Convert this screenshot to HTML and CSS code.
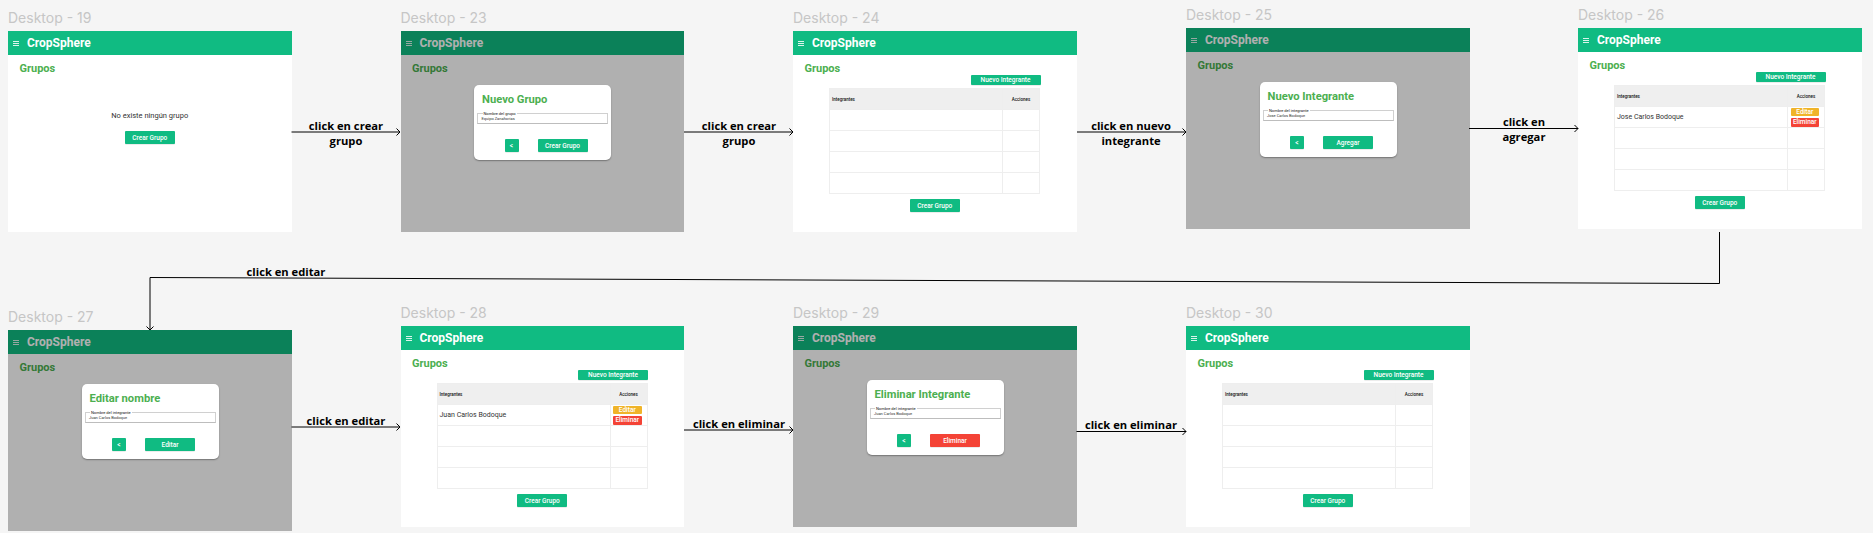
FILE: index.html
```html
<!DOCTYPE html>
<html lang="en">
<head>
    <meta charset="UTF-8">
    <meta name="viewport" content="width=device-width, initial-scale=1.0">
    <title>CropSphere - Flujo de grupos</title>
    <link rel="stylesheet" href="styles.css">
</head>
<body>
<div id="canvas">

    <!-- Desktop - 19 -->
    <section class="screen d19">
        <div class="screen-title">Desktop - 19</div>
        <div class="frame">
            <header class="topbar"><span class="burger"><i></i><i></i><i></i></span><span class="brand">CropSphere</span></header>
            <main class="content">
                <h2 class="heading">Grupos</h2>
                <p class="empty">No existe ningún grupo</p>
                <div class="center-row"><button class="btn btn-main">Crear Grupo</button></div>
            </main>
        </div>
    </section>

    <!-- Desktop - 23 -->
    <section class="screen d23">
        <div class="screen-title">Desktop - 23</div>
        <div class="frame">
            <header class="topbar"><span class="burger"><i></i><i></i><i></i></span><span class="brand">CropSphere</span></header>
            <main class="content"><h2 class="heading">Grupos</h2></main>
            <div class="dim">
                <div class="modal">
                    <h3 class="modal-title">Nuevo Grupo</h3>
                    <fieldset class="field"><legend>Nombre del grupo</legend><span>Equipo Zanahorias</span></fieldset>
                    <div class="modal-actions"><button class="btn btn-back">&lt;</button><button class="btn btn-main">Crear Grupo</button></div>
                </div>
            </div>
        </div>
    </section>

    <!-- Desktop - 24 -->
    <section class="screen d24">
        <div class="screen-title">Desktop - 24</div>
        <div class="frame">
            <header class="topbar"><span class="burger"><i></i><i></i><i></i></span><span class="brand">CropSphere</span></header>
            <main class="content">
                <h2 class="heading">Grupos</h2>
                <div class="new-row"><button class="btn btn-new">Nuevo Integrante</button></div>
                <table class="members">
                    <tr><th>Integrantes</th><th>Acciones</th></tr>
                    <tr><td></td><td></td></tr>
                    <tr><td></td><td></td></tr>
                    <tr><td></td><td></td></tr>
                    <tr><td></td><td></td></tr>
                </table>
                <div class="center-row"><button class="btn btn-main">Crear Grupo</button></div>
            </main>
        </div>
    </section>

    <!-- Desktop - 25 -->
    <section class="screen d25">
        <div class="screen-title">Desktop - 25</div>
        <div class="frame">
            <header class="topbar"><span class="burger"><i></i><i></i><i></i></span><span class="brand">CropSphere</span></header>
            <main class="content"><h2 class="heading">Grupos</h2></main>
            <div class="dim">
                <div class="modal">
                    <h3 class="modal-title">Nuevo Integrante</h3>
                    <fieldset class="field"><legend>Nombre del integrante</legend><span>Jose Carlos Bodoque</span></fieldset>
                    <div class="modal-actions"><button class="btn btn-back">&lt;</button><button class="btn btn-main">Agregar</button></div>
                </div>
            </div>
        </div>
    </section>

    <!-- Desktop - 26 -->
    <section class="screen d26">
        <div class="screen-title">Desktop - 26</div>
        <div class="frame">
            <header class="topbar"><span class="burger"><i></i><i></i><i></i></span><span class="brand">CropSphere</span></header>
            <main class="content">
                <h2 class="heading">Grupos</h2>
                <div class="new-row"><button class="btn btn-new">Nuevo Integrante</button></div>
                <table class="members">
                    <tr><th>Integrantes</th><th>Acciones</th></tr>
                    <tr><td>Jose Carlos Bodoque</td><td><div class="row-actions"><button class="btn btn-edit">Editar</button><button class="btn btn-del">Eliminar</button></div></td></tr>
                    <tr><td></td><td></td></tr>
                    <tr><td></td><td></td></tr>
                    <tr><td></td><td></td></tr>
                </table>
                <div class="center-row"><button class="btn btn-main">Crear Grupo</button></div>
            </main>
        </div>
    </section>

    <!-- Desktop - 27 -->
    <section class="screen d27">
        <div class="screen-title">Desktop - 27</div>
        <div class="frame">
            <header class="topbar"><span class="burger"><i></i><i></i><i></i></span><span class="brand">CropSphere</span></header>
            <main class="content"><h2 class="heading">Grupos</h2></main>
            <div class="dim">
                <div class="modal">
                    <h3 class="modal-title">Editar nombre</h3>
                    <fieldset class="field"><legend>Nombre del integrante</legend><span>Juan Carlos Bodoque</span></fieldset>
                    <div class="modal-actions"><button class="btn btn-back">&lt;</button><button class="btn btn-main">Editar</button></div>
                </div>
            </div>
        </div>
    </section>

    <!-- Desktop - 28 -->
    <section class="screen d28">
        <div class="screen-title">Desktop - 28</div>
        <div class="frame">
            <header class="topbar"><span class="burger"><i></i><i></i><i></i></span><span class="brand">CropSphere</span></header>
            <main class="content">
                <h2 class="heading">Grupos</h2>
                <div class="new-row"><button class="btn btn-new">Nuevo Integrante</button></div>
                <table class="members">
                    <tr><th>Integrantes</th><th>Acciones</th></tr>
                    <tr><td>Juan Carlos Bodoque</td><td><div class="row-actions"><button class="btn btn-edit">Editar</button><button class="btn btn-del">Eliminar</button></div></td></tr>
                    <tr><td></td><td></td></tr>
                    <tr><td></td><td></td></tr>
                    <tr><td></td><td></td></tr>
                </table>
                <div class="center-row"><button class="btn btn-main">Crear Grupo</button></div>
            </main>
        </div>
    </section>

    <!-- Desktop - 29 -->
    <section class="screen d29">
        <div class="screen-title">Desktop - 29</div>
        <div class="frame">
            <header class="topbar"><span class="burger"><i></i><i></i><i></i></span><span class="brand">CropSphere</span></header>
            <main class="content"><h2 class="heading">Grupos</h2></main>
            <div class="dim">
                <div class="modal">
                    <h3 class="modal-title">Eliminar Integrante</h3>
                    <fieldset class="field"><legend>Nombre del integrante</legend><span>Juan Carlos Bodoque</span></fieldset>
                    <div class="modal-actions"><button class="btn btn-back">&lt;</button><button class="btn btn-danger">Eliminar</button></div>
                </div>
            </div>
        </div>
    </section>

    <!-- Desktop - 30 -->
    <section class="screen d30">
        <div class="screen-title">Desktop - 30</div>
        <div class="frame">
            <header class="topbar"><span class="burger"><i></i><i></i><i></i></span><span class="brand">CropSphere</span></header>
            <main class="content">
                <h2 class="heading">Grupos</h2>
                <div class="new-row"><button class="btn btn-new">Nuevo Integrante</button></div>
                <table class="members">
                    <tr><th>Integrantes</th><th>Acciones</th></tr>
                    <tr><td></td><td></td></tr>
                    <tr><td></td><td></td></tr>
                    <tr><td></td><td></td></tr>
                    <tr><td></td><td></td></tr>
                </table>
                <div class="center-row"><button class="btn btn-main">Crear Grupo</button></div>
            </main>
        </div>
    </section>

    <!-- Flow arrows -->
    <svg class="arrows" width="1873" height="533" viewBox="0 0 1873 533" fill="none" stroke="#000" stroke-width="1">
        <path d="M291.5 132H400M396.5 128.5L400 132L396.5 135.5"/>
        <path d="M684 132H793M789.5 128.5L793 132L789.5 135.5"/>
        <path d="M1077 132H1186M1182.5 128.5L1186 132L1182.5 135.5"/>
        <path d="M1469 128.5H1578M1574.5 125L1578 128.5L1574.5 132"/>
        <path d="M1719.5 232V283.5L150 277.5V330M146.5 326.5L150 330L153.5 326.5"/>
        <path d="M291.5 427H400M396.5 423.5L400 427L396.5 430.5"/>
        <path d="M684 430H793M789.5 426.5L793 430L789.5 433.5"/>
        <path d="M1076.5 431.5H1186M1182.5 428L1186 431.5L1182.5 435"/>
    </svg>

    <!-- Flow labels -->
    <div class="flow-label l1">click en crear<br>grupo</div>
    <div class="flow-label l2">click en crear<br>grupo</div>
    <div class="flow-label l3">click en nuevo<br>integrante</div>
    <div class="flow-label l4">click en<br>agregar</div>
    <div class="flow-label l5">click en editar</div>
    <div class="flow-label l6">click en editar</div>
    <div class="flow-label l7">click en eliminar</div>
    <div class="flow-label l8">click en eliminar</div>
</div>
</body>
</html>
```

FILE: styles.css
```css
body {
    margin: 0;
    background-color: #f5f5f5;
    font-family: Roboto, sans-serif;
    overflow: hidden;
}
#canvas {
    position: relative;
    width: 1873px;
    height: 533px;
}

/* frames sit on a free canvas, like in the design tool */
.screen {
    position: absolute;
    width: 283.5px;
}
.d19 { left: 8px; top: 8.5px; }
.d23 { left: 400.5px; top: 8.5px; }
.d24 { left: 793px; top: 8.5px; }
.d25 { left: 1186px; top: 5.5px; }
.d26 { left: 1578px; top: 5.5px; }
.d27 { left: 8px; top: 307.5px; }
.d28 { left: 400.5px; top: 303.5px; }
.d29 { left: 793px; top: 303.5px; }
.d30 { left: 1186px; top: 303.5px; }

.screen-title {
    height: 17px;
    margin-bottom: 5.5px;
    font-family: Inter, sans-serif;
    font-size: 14px;
    line-height: 17px;
    color: #c6c6c6;
}
.frame {
    position: relative;
    height: 201px;
    background-color: #fff;
}
.topbar {
    display: flex;
    align-items: center;
    height: 24px;
    padding-left: 5px;
    background-color: #10bb82;
    color: #fff;
}
.burger {
    display: flex;
    flex-direction: column;
    gap: 1px;
    width: 6px;
    margin-right: 8px;
    opacity: 0.85;
}
.burger i {
    display: block;
    height: 1px;
    background-color: #fff;
}
.brand {
    font-size: 12px;
    font-weight: 700;
}
.content {
    padding: 7px 11.5px 0;
}
.heading {
    margin: 0;
    font-size: 11px;
    line-height: 13px;
    font-weight: 700;
    color: #4caf50;
}
.empty {
    margin: 36px 0 10px;
    font-size: 7.5px;
    line-height: 10px;
    text-align: center;
    color: #333;
}
.center-row {
    display: flex;
    justify-content: center;
}

/* buttons */
.btn {
    display: block;
    margin: 0;
    padding: 0;
    border: none;
    border-radius: 1px;
    color: #fff;
    font-family: Roboto, sans-serif;
    font-size: 6.5px;
    font-weight: 500;
    box-shadow: 0 0.5px 0.5px rgba(0, 0, 0, 0.15);
}
.btn-main {
    width: 50px;
    height: 13px;
    background-color: #10bb82;
}
.btn-danger {
    width: 50px;
    height: 13px;
    background-color: #f44336;
}
.btn-back {
    width: 14px;
    height: 13px;
    background-color: #10bb82;
}
.btn-new {
    width: 70px;
    height: 10px;
    background-color: #10bb82;
}
.btn-edit {
    width: 28.5px;
    height: 8px;
    background-color: #f0b429;
    box-shadow: none;
}
.btn-del {
    width: 28.5px;
    height: 9px;
    background-color: #f44336;
    box-shadow: none;
}
.row-actions {
    display: flex;
    flex-direction: column;
    gap: 2px;
    margin-left: 2.5px;
}

/* table */
.new-row {
    display: flex;
    justify-content: flex-end;
    margin-right: 24.5px;
}
.members {
    width: 211px;
    margin: 3px 0 5px 24.5px;
    border-collapse: collapse;
    table-layout: fixed;
}
.members th,
.members td {
    height: 21px;
    padding: 0;
    border: 1px solid #eeeeee;
    box-sizing: border-box;
    font-size: 7px;
    font-weight: 400;
    color: #333;
    text-align: left;
}
.members th {
    background-color: #efefef;
    font-size: 4.5px;
    font-weight: 500;
    color: #111;
}
.members tr > :first-child {
    width: 173px;
    padding-left: 2px;
}
.members th:last-child {
    text-align: center;
}

/* dimmed state with dialog */
.dim {
    position: absolute;
    inset: 0;
    background-color: rgba(0, 0, 0, 0.31);
}
.modal {
    position: absolute;
    left: 73.5px;
    top: 54px;
    box-sizing: border-box;
    width: 137px;
    height: 75px;
    padding: 7.5px 3px 0;
    border-radius: 5px;
    background-color: #fff;
    box-shadow: 0 1px 1.5px rgba(0, 0, 0, 0.35);
}
.modal-title {
    margin: 0 0 5px 5px;
    font-size: 11.2px;
    line-height: 14px;
    font-weight: 700;
    color: #4caf50;
}
.field {
    box-sizing: border-box;
    height: 12px;
    margin: 0;
    padding: 0 0 0 3.5px;
    border: 1px solid #d0d0d0;
    border-bottom-color: #bdbdbd;
    font-size: 4px;
    line-height: 5px;
    color: #333;
}
.field legend {
    margin-left: 1px;
    padding: 0 1px;
    font-size: 4px;
    line-height: 4px;
    color: #111;
}
.modal-actions {
    display: flex;
    gap: 19px;
    margin-top: 15.5px;
    padding-left: 27.5px;
}

/* flow labels */
.arrows {
    position: absolute;
    left: 0;
    top: 0;
}
.flow-label {
    position: absolute;
    width: 130px;
    font-family: "Open Sans", sans-serif;
    font-size: 11.2px;
    font-weight: 700;
    line-height: 15px;
    text-align: center;
    color: #000;
}
.l1 { left: 281px; top: 117.5px; }
.l2 { left: 674px; top: 117.5px; }
.l3 { left: 1066px; top: 117.5px; }
.l4 { left: 1459px; top: 114px; }
.l5 { left: 221px; top: 263.5px; }
.l6 { left: 281px; top: 412.5px; }
.l7 { left: 674px; top: 416px; }
.l8 { left: 1066px; top: 416.5px; }
```
